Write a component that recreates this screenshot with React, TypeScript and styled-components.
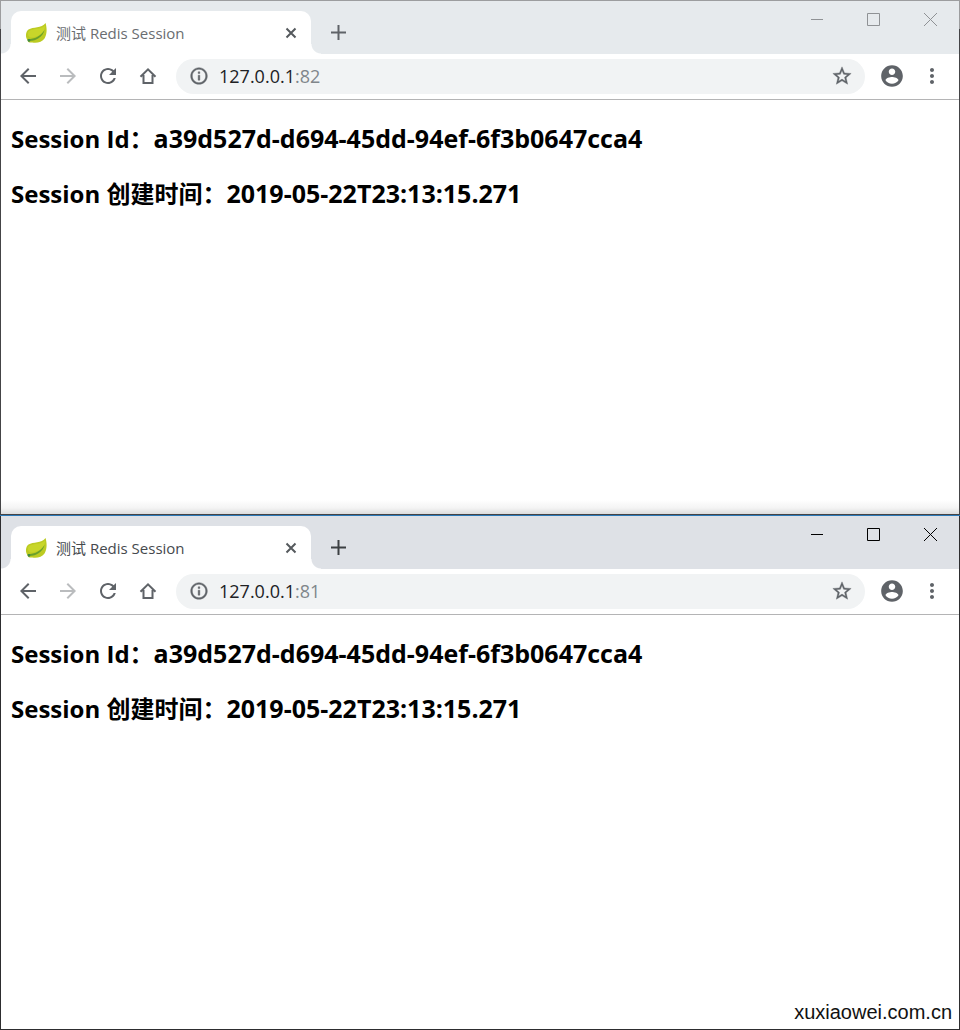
import React from "react";
import styled, { createGlobalStyle, css } from "styled-components";

const uiFont = '"Open Sans", "Noto Sans CJK SC", sans-serif';

const GlobalStyle = createGlobalStyle`
  *, *::before, *::after { box-sizing: border-box; }
  body { margin: 0; background: #fff; font-family: ${uiFont}; }
  button, input { font: inherit; color: inherit; }
`;

const Desktop = styled.div`
  position: relative;
  display: grid;
  grid-template-rows: 1fr 1fr;
  min-height: 100vh;
`;

const Frame = styled.section<{ $active: boolean }>`
  display: flex;
  flex-direction: column;
  padding: 1px;
  background: ${(p) =>
    p.$active
      ? "linear-gradient(#2b79b8 1px, #2d2d2f 1px)"
      : "linear-gradient(#9c9d9f 29px, #444446 29px)"};
`;

const TabStrip = styled.header<{ $active: boolean }>`
  --strip: ${(p) => (p.$active ? "#dee1e6" : "#e6eaed")};
  display: flex;
  align-items: flex-end;
  height: 53px;
  padding-left: 10px;
  background: var(--strip);
`;

const foot = css`
  content: "";
  position: absolute;
  bottom: 0;
  width: 10px;
  height: 10px;
`;

const Tab = styled.div<{ $active: boolean }>`
  position: relative;
  display: flex;
  align-items: center;
  width: 300px;
  height: 43px;
  padding: 0 8px 0 14px;
  border-radius: 10px 10px 0 0;
  background: #fff;
  color: ${(p) => (p.$active ? "#45494d" : "#6a6d71")};

  &::before {
    ${foot}
    right: 100%;
    background: radial-gradient(circle at 0 0, var(--strip) 9px, #fff 10px);
  }
  &::after {
    ${foot}
    left: 100%;
    background: radial-gradient(circle at 100% 0, var(--strip) 9px, #fff 10px);
  }
`;

const TabTitle = styled.span`
  flex: 1;
  margin-left: 8px;
  font-size: 15px;
  line-height: 20px;
  white-space: nowrap;
`;

const IconButton = styled.button<{ $width: number; $height: number; $color?: string }>`
  display: flex;
  flex: none;
  align-items: center;
  justify-content: center;
  width: ${(p) => p.$width}px;
  height: ${(p) => p.$height}px;
  padding: 0;
  border: 0;
  background: none;
  color: ${(p) => p.$color ?? "inherit"};
`;

const ToolButton = styled(IconButton).attrs({ $width: 40, $height: 35 })`
  padding-bottom: 1px;
`;

const WindowControls = styled.div`
  display: flex;
  align-self: flex-start;
  margin-left: auto;
`;

const Toolbar = styled.nav`
  display: flex;
  align-items: center;
  height: 46px;
  padding: 0 7px;
  border-bottom: 1px solid #b4b4b5;
  background: #fff;
  color: #5f6368;
`;

const AddressBar = styled.div`
  display: flex;
  flex: 1;
  align-items: center;
  height: 35px;
  margin: 0 7px 0 8px;
  padding: 0 3px;
  border-radius: 18px;
  background: #f1f3f4;
`;

const Address = styled.a`
  flex: 1;
  padding-bottom: 2px;
  color: #202124;
  font-size: 18px;
  line-height: 24px;
  text-decoration: none;
`;

const Port = styled.span`
  color: #80868b;
`;

const Page = styled.main<{ $shaded: boolean }>`
  flex: 1;
  padding: 21px 10px;
  background: ${(p) =>
    p.$shaded ? "linear-gradient(to top, #dcdcdc, #f4f4f4 6px, #fff 14px)" : "#fff"};
`;

const Heading = styled.h2`
  margin: 0 0 20px;
  color: #000;
  font-size: 24px;
  font-weight: 700;
  line-height: 35px;
`;

const Value = styled.span`
  font-size: 25px;
`;

const Watermark = styled.span`
  position: absolute;
  right: 8px;
  bottom: 6px;
  color: #111;
  font-family: "Liberation Sans", sans-serif;
  font-size: 20px;
  line-height: 24px;
`;

interface GlyphProps {
  d: string;
  size?: number;
  bold?: number;
}

const Glyph = ({ d, size = 24, bold = 0 }: GlyphProps) => (
  <svg
    width={size}
    height={size}
    viewBox="0 0 24 24"
    fill="currentColor"
    stroke="currentColor"
    strokeWidth={bold}
    aria-hidden="true"
  >
    <path d={d} />
  </svg>
);

const glyphs = {
  back: "M20 11H7.83l5.59-5.59L12 4l-8 8 8 8 1.41-1.41L7.83 13H20v-2z",
  forward: "M12 4l-1.41 1.41L16.17 11H4v2h12.17l-5.58 5.59L12 20l8-8z",
  reload:
    "M17.65 6.35C16.2 4.9 14.21 4 12 4c-4.42 0-7.99 3.58-7.99 8s3.57 8 7.99 8c3.73 0 6.84-2.55 7.73-6h-2.08c-.82 2.33-3.04 4-5.65 4-3.31 0-6-2.69-6-6s2.69-6 6-6c1.66 0 3.14.69 4.22 1.78L13 11h7V4l-2.35 2.35z",
  info: "M11 7h2v2h-2zm0 4h2v6h-2zm1-9C6.48 2 2 6.48 2 12s4.48 10 10 10 10-4.48 10-10S17.52 2 12 2zm0 18c-4.41 0-8-3.59-8-8s3.59-8 8-8 8 3.59 8 8-3.59 8-8 8z",
  star: "M22 9.24l-7.19-.62L12 2 9.19 8.63 2 9.24l5.46 4.73L5.82 21 12 17.27 18.18 21l-1.63-7.03L22 9.24zM12 15.4l-3.76 2.27 1-4.28-3.32-2.88 4.38-.38L12 6.1l1.71 4.04 4.38.38-3.32 2.88 1 4.28L12 15.4z",
  account:
    "M12 2C6.48 2 2 6.48 2 12s4.48 10 10 10 10-4.48 10-10S17.52 2 12 2zm0 3c1.66 0 3 1.34 3 3s-1.34 3-3 3-3-1.34-3-3 1.34-3 3-3zm0 14.2c-2.5 0-4.71-1.28-6-3.22.03-1.99 4-3.08 6-3.08 1.99 0 5.97 1.09 6 3.08-1.29 1.94-3.5 3.22-6 3.22z",
  more: "M12 8c1.1 0 2-.9 2-2s-.9-2-2-2-2 .9-2 2 .9 2 2 2zm0 2c-1.1 0-2 .9-2 2s.9 2 2 2 2-.9 2-2-.9-2-2-2zm0 6c-1.1 0-2 .9-2 2s.9 2 2 2 2-.9 2-2-.9-2-2-2z",
};

const Stroke = ({ d, size, width = 1 }: { d: string; size: number; width?: number }) => (
  <svg
    width={size}
    height={size}
    viewBox={`0 0 ${size} ${size}`}
    fill="none"
    stroke="currentColor"
    strokeWidth={width}
    aria-hidden="true"
  >
    <path d={d} />
  </svg>
);

const Leaf = () => (
  <svg width="23" height="22" viewBox="0 0 23 22" aria-hidden="true">
    <path
      d="M20.6 1C22 6 22.2 12 19.7 16.2C17.2 20.3 11.5 21.2 7.3 20.4C5.5 20.8 3 20.4 2.6 18.4C0.3 15.5 0.3 9.9 3.5 7.6C8 4.4 16.5 6.800 20.6 1Z"
      fill="#bccb22"
    />
    <path d="M3.500 9.500C8 5.800 16 8 20 3.500C20 10 15 14 8 15.500C4 16.300 2 13 3.500 9.500Z" fill="#c8d62a" />
    <path d="M2.600 17C9 17.200 15 15 19.600 8C17.500 15.500 10.500 19.400 3 18.800Z" fill="#69a02c" />
    <circle cx="4" cy="18.400" r="1.300" fill="#3f8a45" />
  </svg>
);

interface BrowserProps {
  active: boolean;
  port: string;
}

const Browser = ({ active, port }: BrowserProps) => {
  const control = active ? "#000" : "#8f9295";
  const plus = active ? "#3c4043" : "#5f6368";
  return (
    <Frame $active={active}>
      <TabStrip $active={active}>
        <Tab $active={active}>
          <Leaf />
          <TabTitle>测试 Redis Session</TabTitle>
          <IconButton $width={24} $height={24} $color="#55595d" aria-label="Close tab">
            <Stroke size={12} width={2} d="M1.500 1.500L10.500 10.500M10.500 1.500L1.500 10.500" />
          </IconButton>
        </Tab>
        <IconButton $width={55} $height={43} $color={plus} aria-label="New tab">
          <Stroke size={15} width={2} d="M7.500 0V15M0 7.500H15" />
        </IconButton>
        <WindowControls>
          <IconButton $width={57} $height={37} $color={control} aria-label="Minimize">
            <Stroke size={13} d="M1 6.500H14" />
          </IconButton>
          <IconButton $width={57} $height={37} $color={control} aria-label="Maximize">
            <Stroke size={13} d="M0.500 0.500H12.500V12.500H0.500Z" />
          </IconButton>
          <IconButton $width={57} $height={37} $color={control} aria-label="Close">
            <Stroke size={13} d="M0 0L13 13M13 0L0 13" />
          </IconButton>
        </WindowControls>
      </TabStrip>
      <Toolbar>
        <ToolButton aria-label="Back">
          <Glyph d={glyphs.back} />
        </ToolButton>
        <ToolButton $color="#babcbe" aria-label="Forward">
          <Glyph d={glyphs.forward} />
        </ToolButton>
        <ToolButton aria-label="Reload">
          <Glyph d={glyphs.reload} />
        </ToolButton>
        <ToolButton aria-label="Home">
          <Stroke size={18} width={2} d="M1.500 9.800L9 2.300L16.500 9.800M4.500 8V16H13.500V8" />
        </ToolButton>
        <AddressBar>
          <ToolButton aria-label="Site information">
            <Glyph d={glyphs.info} size={20} bold={0.5} />
          </ToolButton>
          <Address href="#">
            127.0.0.1<Port>:{port}</Port>
          </Address>
          <ToolButton aria-label="Bookmark">
            <Glyph d={glyphs.star} size={22} bold={0.4} />
          </ToolButton>
        </AddressBar>
        <ToolButton aria-label="Profile">
          <Glyph d={glyphs.account} size={26} />
        </ToolButton>
        <ToolButton aria-label="Menu">
          <Glyph d={glyphs.more} />
        </ToolButton>
      </Toolbar>
      <Page $shaded={!active}>
        <Heading>
          Session Id：<Value>a39d527d-d694-45dd-94ef-6f3b0647cca4</Value>
        </Heading>
        <Heading>
          Session 创建时间：<Value>2019-05-22T23:13:15.271</Value>
        </Heading>
      </Page>
    </Frame>
  );
};

export default function App() {
  return (
    <>
      <GlobalStyle />
      <Desktop>
        <Browser active={false} port="82" />
        <Browser active port="81" />
        <Watermark>xuxiaowei.com.cn</Watermark>
      </Desktop>
    </>
  );
}
